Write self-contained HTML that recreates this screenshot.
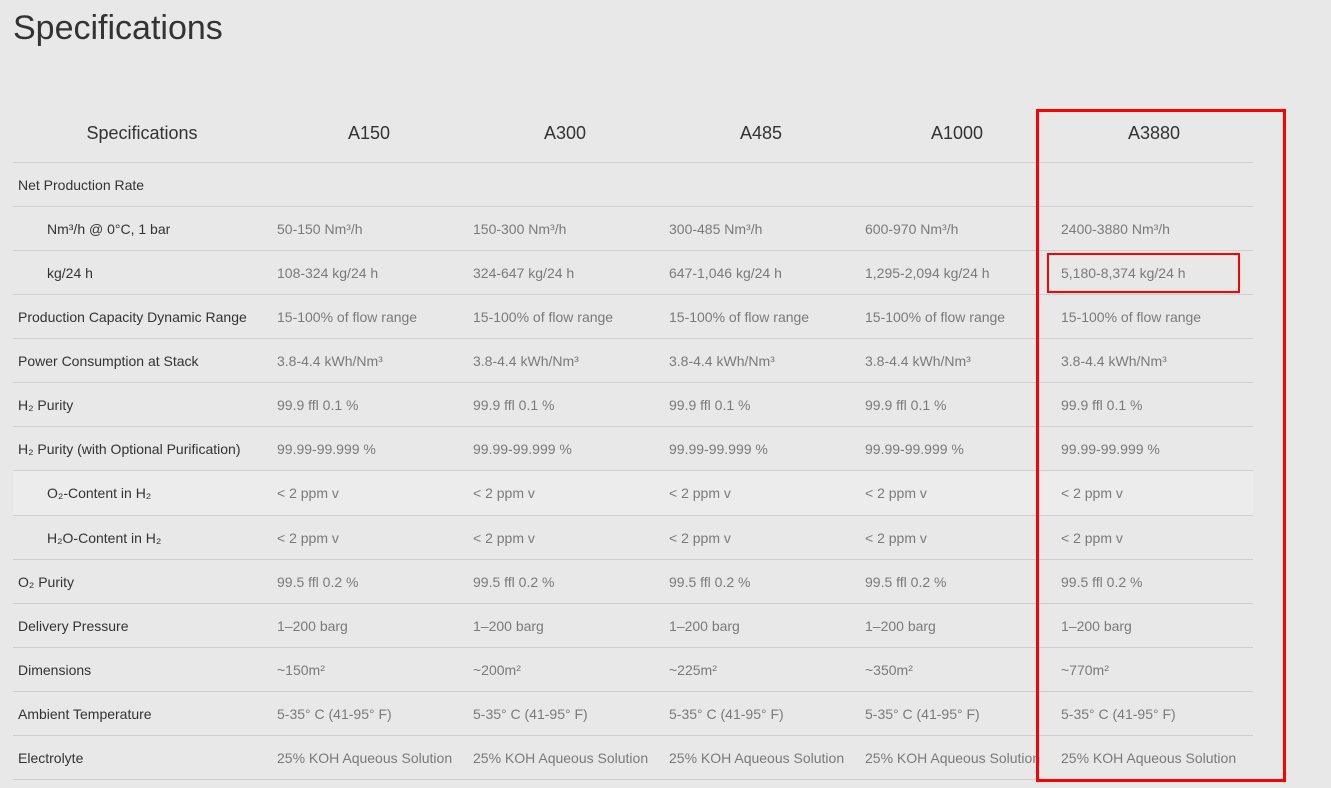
<!DOCTYPE html>
<html><head><style>
body{margin:0;width:1331px;height:788px;background:#e8e8e8;font-family:"Liberation Sans",sans-serif;position:relative;overflow:hidden}
h1{position:absolute;left:13px;top:9px;margin:0;font-weight:normal;font-size:34px;color:#333}
table{position:absolute;left:13px;top:105px;border-collapse:collapse;table-layout:fixed;width:1240px}
td,th{padding:0;border-bottom:1px solid #cfcfcf;height:43px;font-size:14px;white-space:nowrap;overflow:visible}
th{height:57px;font-weight:normal;font-size:18px;color:#333;text-align:center}
td{color:#7a7a7a;padding-left:6px}
td:first-child{color:#333;padding-left:5px}
td.in{padding-left:34px}
.alt td{background:#ececec}
.box{position:absolute;left:1036px;top:109px;width:244px;height:667px;border:3px solid #f00}
.box2{position:absolute;left:1047px;top:253px;width:189px;height:36px;border:2px solid #f00}
</style></head><body>
<h1>Specifications</h1>
<table>
<colgroup><col style="width:258px"><col style="width:196px"><col style="width:196px"><col style="width:196px"><col style="width:196px"><col style="width:198px"></colgroup>
<tr><th>Specifications</th><th>A150</th><th>A300</th><th>A485</th><th>A1000</th><th>A3880</th></tr>
<tr><td>Net Production Rate</td><td></td><td></td><td></td><td></td><td></td></tr>
<tr><td class="in">Nm³/h @ 0°C, 1 bar</td><td>50-150 Nm³/h</td><td>150-300 Nm³/h</td><td>300-485 Nm³/h</td><td>600-970 Nm³/h</td><td>2400-3880 Nm³/h</td></tr>
<tr><td class="in">kg/24 h</td><td>108-324 kg/24 h</td><td>324-647 kg/24 h</td><td>647-1,046 kg/24 h</td><td>1,295-2,094 kg/24 h</td><td>5,180-8,374 kg/24 h</td></tr>
<tr><td>Production Capacity Dynamic Range</td><td>15-100% of flow range</td><td>15-100% of flow range</td><td>15-100% of flow range</td><td>15-100% of flow range</td><td>15-100% of flow range</td></tr>
<tr><td>Power Consumption at Stack</td><td>3.8-4.4 kWh/Nm³</td><td>3.8-4.4 kWh/Nm³</td><td>3.8-4.4 kWh/Nm³</td><td>3.8-4.4 kWh/Nm³</td><td>3.8-4.4 kWh/Nm³</td></tr>
<tr><td>H₂ Purity</td><td>99.9 ffl 0.1 %</td><td>99.9 ffl 0.1 %</td><td>99.9 ffl 0.1 %</td><td>99.9 ffl 0.1 %</td><td>99.9 ffl 0.1 %</td></tr>
<tr><td>H₂ Purity (with Optional Purification)</td><td>99.99-99.999 %</td><td>99.99-99.999 %</td><td>99.99-99.999 %</td><td>99.99-99.999 %</td><td>99.99-99.999 %</td></tr>
<tr class="alt"><td class="in" style="height:44px">O₂-Content in H₂</td><td>&lt; 2 ppm v</td><td>&lt; 2 ppm v</td><td>&lt; 2 ppm v</td><td>&lt; 2 ppm v</td><td>&lt; 2 ppm v</td></tr>
<tr><td class="in">H₂O-Content in H₂</td><td>&lt; 2 ppm v</td><td>&lt; 2 ppm v</td><td>&lt; 2 ppm v</td><td>&lt; 2 ppm v</td><td>&lt; 2 ppm v</td></tr>
<tr><td>O₂ Purity</td><td>99.5 ffl 0.2 %</td><td>99.5 ffl 0.2 %</td><td>99.5 ffl 0.2 %</td><td>99.5 ffl 0.2 %</td><td>99.5 ffl 0.2 %</td></tr>
<tr><td>Delivery Pressure</td><td>1–200 barg</td><td>1–200 barg</td><td>1–200 barg</td><td>1–200 barg</td><td>1–200 barg</td></tr>
<tr><td>Dimensions</td><td>~150m²</td><td>~200m²</td><td>~225m²</td><td>~350m²</td><td>~770m²</td></tr>
<tr><td>Ambient Temperature</td><td>5-35° C (41-95° F)</td><td>5-35° C (41-95° F)</td><td>5-35° C (41-95° F)</td><td>5-35° C (41-95° F)</td><td>5-35° C (41-95° F)</td></tr>
<tr><td>Electrolyte</td><td>25% KOH Aqueous Solution</td><td>25% KOH Aqueous Solution</td><td>25% KOH Aqueous Solution</td><td>25% KOH Aqueous Solution</td><td>25% KOH Aqueous Solution</td></tr>
</table>
<div class="box"></div><div class="box2"></div>
</body></html>
